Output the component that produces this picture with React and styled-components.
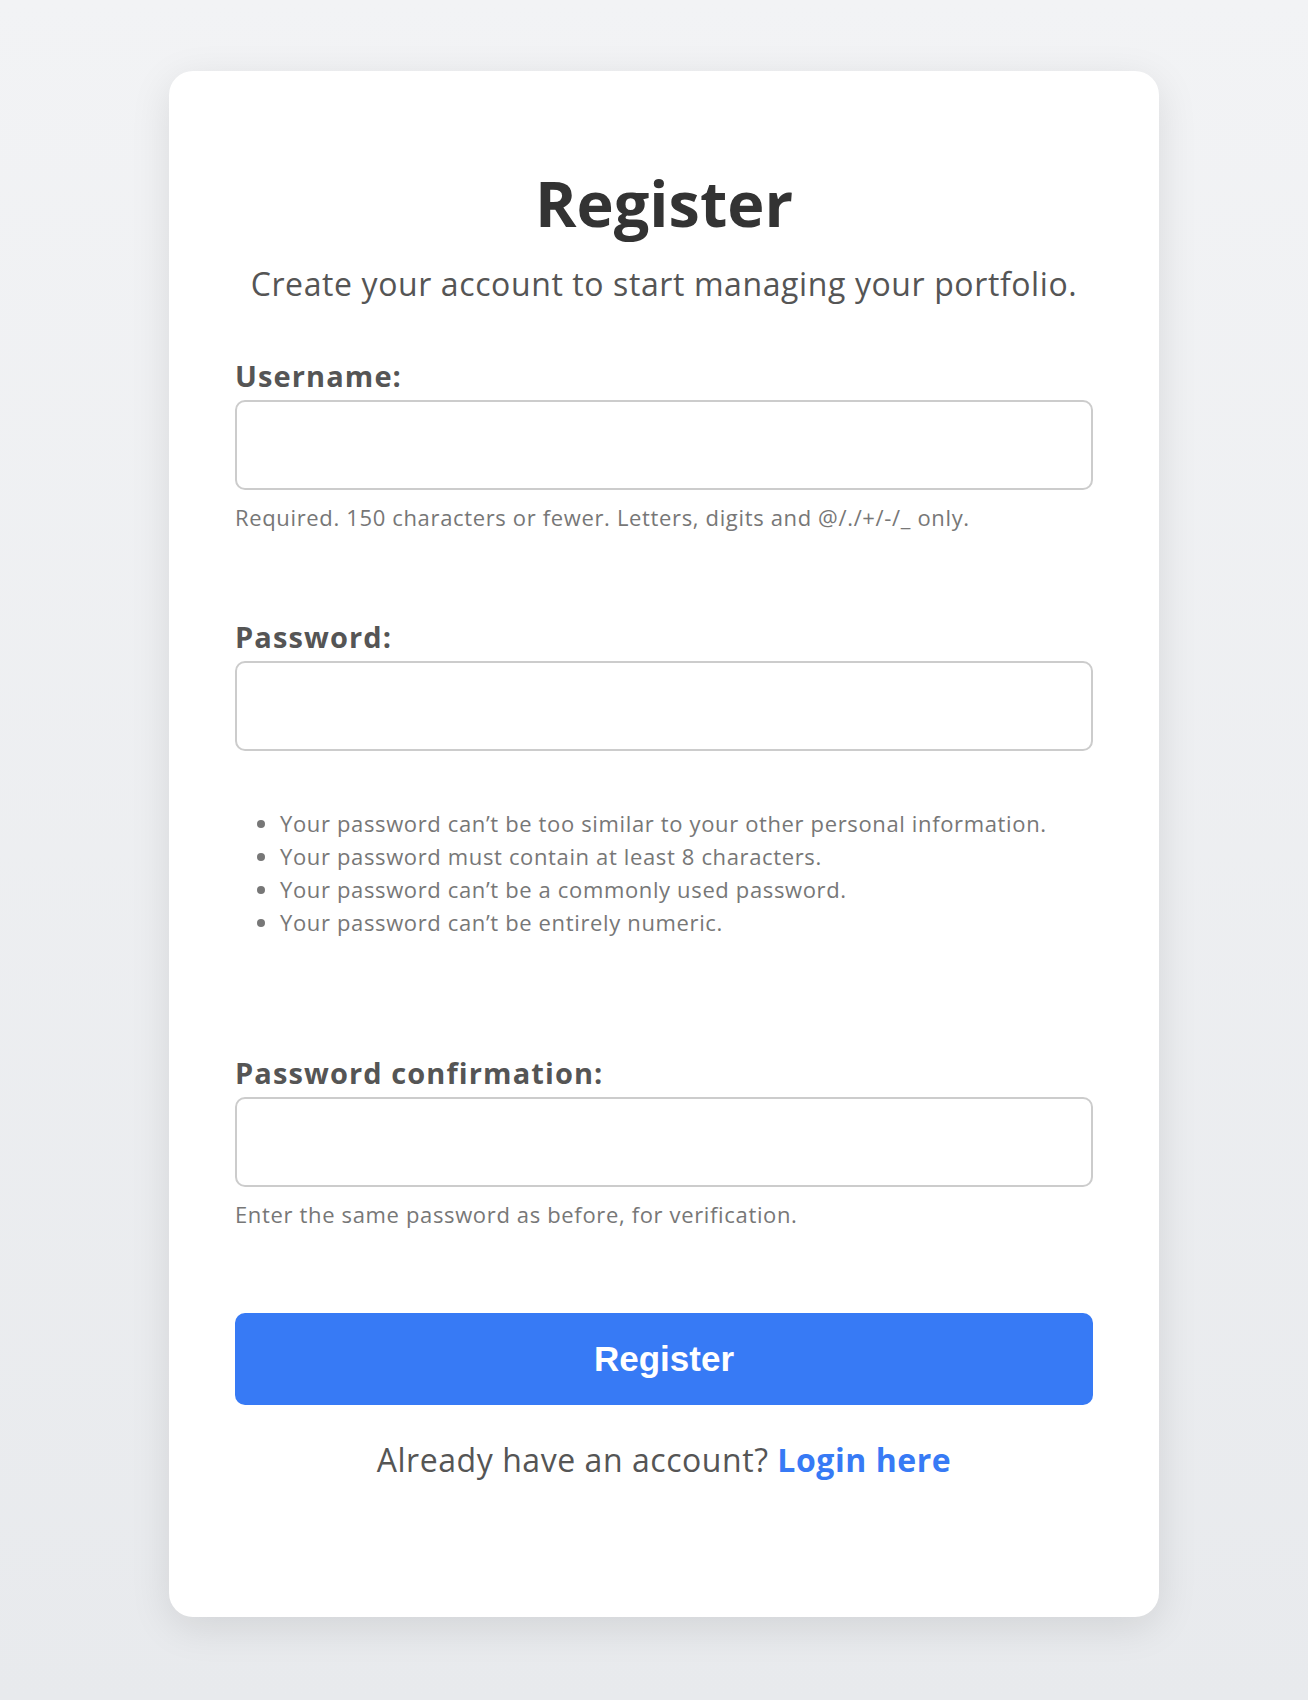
import React from 'react';
import styled, { createGlobalStyle } from 'styled-components';

const GlobalStyle = createGlobalStyle`
  html, body {
    margin: 0;
    padding: 0;
  }
  body {
    font-family: "Open Sans", "Liberation Sans", sans-serif;
    background: linear-gradient(to bottom, #f2f3f5, #e8eaed);
  }
  * {
    box-sizing: border-box;
  }
`;

const Page = styled.div`
  min-height: 1700px;
  display: flex;
  justify-content: center;
  align-items: flex-start;
  padding: 71px 0 0 20px;
`;

const Card = styled.div`
  width: 990px;
  background: #fff;
  border-radius: 24px;
  box-shadow: 0 10px 40px rgba(0, 0, 0, 0.1);
  padding: 92px 66px 135px;
`;

const Title = styled.h1`
  margin: 0 0 19px;
  font-size: 63px;
  line-height: 80px;
  font-weight: 700;
  color: #333;
  text-align: center;
`;

const Subtitle = styled.p`
  margin: 0 0 52px;
  font-size: 32px;
  line-height: 44px;
  letter-spacing: 0.6px;
  color: #555;
  text-align: center;
`;

const Field = styled.div`
  margin-bottom: ${(p) => p.$gap || 0}px;
`;

const Label = styled.label`
  display: block;
  margin-bottom: 6px;
  font-size: 29px;
  line-height: 36px;
  letter-spacing: 1.1px;
  font-weight: 700;
  color: #555;
`;

const Input = styled.input`
  display: block;
  width: 100%;
  height: 90px;
  padding: 0 20px;
  border: 2px solid #ccc;
  border-radius: 10px;
  font-size: 24px;
  font-family: inherit;
  background: #fff;
  outline: none;
`;

const Help = styled.div`
  margin-top: 12px;
  font-size: 22px;
  line-height: 30px;
  letter-spacing: 0.65px;
  color: #777;
`;

const HelpList = styled.ul`
  margin: 56px 0 0;
  padding-left: 45px;
  font-size: 22px;
  line-height: 33px;
  letter-spacing: 0.64px;
  color: #777;
`;

const Button = styled.button`
  display: block;
  width: 100%;
  height: 92px;
  margin-top: 84px;
  border: none;
  border-radius: 10px;
  background: #377af5;
  color: #fff;
  font-family: "Liberation Sans", Arial, sans-serif;
  font-size: 35px;
  font-weight: 700;
  cursor: pointer;
`;

const Footer = styled.p`
  margin: 33px 0 0;
  font-size: 32px;
  line-height: 44px;
  letter-spacing: 0.55px;
  color: #555;
  text-align: center;
`;

const LoginLink = styled.a`
  color: #377af5;
  font-weight: 700;
  text-decoration: none;
`;

const rules = [
  'Your password can’t be too similar to your other personal information.',
  'Your password must contain at least 8 characters.',
  'Your password can’t be a commonly used password.',
  'Your password can’t be entirely numeric.',
];

export default function App() {
  return (
    <Page>
      <GlobalStyle />
      <Card>
        <Title>Register</Title>
        <Subtitle>Create your account to start managing your portfolio.</Subtitle>
        <form onSubmit={(e) => e.preventDefault()}>
          <Field $gap={87}>
            <Label htmlFor="id_username">Username:</Label>
            <Input id="id_username" type="text" />
            <Help>Required. 150 characters or fewer. Letters, digits and @/./+/-/_ only.</Help>
          </Field>
          <Field $gap={116}>
            <Label htmlFor="id_password1">Password:</Label>
            <Input id="id_password1" type="password" />
            <HelpList>
              {rules.map((r) => (
                <li key={r}>{r}</li>
              ))}
            </HelpList>
          </Field>
          <Field>
            <Label htmlFor="id_password2">Password confirmation:</Label>
            <Input id="id_password2" type="password" />
            <Help>Enter the same password as before, for verification.</Help>
          </Field>
          <Button type="submit">Register</Button>
        </form>
        <Footer>
          Already have an account? <LoginLink href="#">Login here</LoginLink>
        </Footer>
      </Card>
    </Page>
  );
}
